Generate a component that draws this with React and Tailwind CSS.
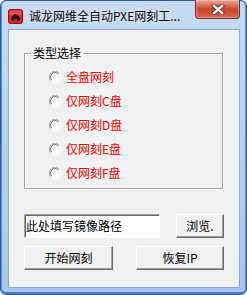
import React from 'react';

const font = { fontFamily: '"Noto Sans CJK SC", "Liberation Sans", sans-serif' };

const options = ['全盘网刻', '仅网刻C盘', '仅网刻D盘', '仅网刻E盘', '仅网刻F盘'];

function Radio() {
  return (
    <svg width="12" height="12" viewBox="0 0 12 12" className="shrink-0">
      <circle cx="6" cy="6" r="5.5" fill="#ffffff" />
      <path d="M10.2 2.2 A5.5 5.5 0 0 0 1.8 9.8" fill="none" stroke="#a0a0a0" strokeWidth="1" />
      <path d="M9.2 2.9 A4.3 4.3 0 0 0 2.8 8.9" fill="none" stroke="#696969" strokeWidth="1" />
      <path d="M1.8 9.8 A5.5 5.5 0 0 0 10.2 2.2" fill="none" stroke="#ffffff" strokeWidth="1" />
      <path d="M2.9 9.2 A4.3 4.3 0 0 0 9.2 2.9" fill="none" stroke="#e3e3e3" strokeWidth="1" />
    </svg>
  );
}

function WinButton({ children, className }) {
  return (
    <button
      className={`h-[24px] border border-t-white border-l-white border-r-[#696969] border-b-[#696969] bg-[#f0f0f0] shadow-[inset_-1px_-1px_0_#a0a0a0] text-[12px] leading-[22px] text-black ${className}`}
      style={font}
    >
      {children}
    </button>
  );
}

export default function App() {
  return (
    <div className="relative w-[247px] h-[295px] flex flex-col rounded-[6px] border border-[#2c5a9c] bg-gradient-to-b from-[#c6daf2] to-[#a9c6e9] shadow-[inset_1px_0_0_#5b8ed0,inset_-1px_0_0_#5b8ed0,inset_0_-2px_0_#4a7fc6]" style={font}>
      <div className="h-[28px] flex items-center pl-[7px] shrink-0">
        <svg width="15" height="15" viewBox="0 0 15 15" className="mt-[2px]">
          <rect x="0.5" y="0.5" width="14" height="14" rx="2" fill="#e8202a" stroke="#9a1015" />
          <rect x="1.5" y="1.5" width="12" height="5" rx="1" fill="#ff6a6a" opacity="0.6" />
          <path d="M3 10 L4.5 6.5 L7 5 L9.5 6 L11.5 8 L12 10 Z" fill="#1a1a1a" />
          <circle cx="5" cy="10.5" r="1.4" fill="#1a1a1a" />
          <circle cx="10.5" cy="10.5" r="1.4" fill="#1a1a1a" />
        </svg>
        <span className="ml-[6px] text-[12px] leading-[16px] text-black mt-[1px] [text-shadow:0_0_4px_#ffffff]">
          诚龙网维全自动PXE网刻工...
        </span>
      </div>

      <div className="absolute top-[-1px] right-[6px] w-[45px] h-[19px] rounded-b-[4px] border border-t-0 border-[#6e2a22] bg-gradient-to-b from-[#e9a898] via-[#c8452e] to-[#d9644a] flex items-center justify-center shadow-[inset_0_0_0_1px_rgba(255,200,190,0.5)]">
        <svg width="14" height="11" viewBox="0 0 14 11">
          <path d="M3 2 L11 9 M11 2 L3 9" stroke="#5a2a25" strokeWidth="4.2" strokeLinecap="square" />
          <path d="M3 2 L11 9 M11 2 L3 9" stroke="#ffffff" strokeWidth="2.4" strokeLinecap="square" />
        </svg>
      </div>

      <div className="ml-[7px] mr-[6px] h-[259px] bg-[#f0f0f0] border border-[#8aa4c6] px-[15px] flex flex-col">
        <fieldset className="mt-[15px] w-[199px] border border-[#a0a0a0] shadow-[inset_1px_1px_0_#ffffff,1px_1px_0_#ffffff] px-0">
          <legend className="ml-[6px] px-[2px] text-[12px] leading-[16px] text-black">类型选择</legend>
          <div className="pl-[24px] pt-[4px] pb-[3px] flex flex-col">
            {options.map(o => (
              <div key={o} className="h-[24px] flex items-center gap-[5px]">
                <Radio />
                <span className="text-[12px] leading-[14px] text-[#ff0000]">{o}</span>
              </div>
            ))}
          </div>
        </fieldset>

        <div className="mt-[25px] flex items-center">
          <div className="w-[136px] h-[24px] bg-white border border-t-[#a0a0a0] border-l-[#a0a0a0] border-r-white border-b-white shadow-[inset_1px_1px_0_#696969] flex items-center pl-[1px] text-[12px] leading-[14px] text-black">
            此处填写镜像路径
          </div>
          <WinButton className="ml-[16px] w-[48px]">浏览.</WinButton>
        </div>

        <div className="mt-[8px] flex">
          <WinButton className="w-[89px]">开始网刻</WinButton>
          <WinButton className="ml-[23px] w-[88px]">恢复IP</WinButton>
        </div>
      </div>
    </div>
  );
}
